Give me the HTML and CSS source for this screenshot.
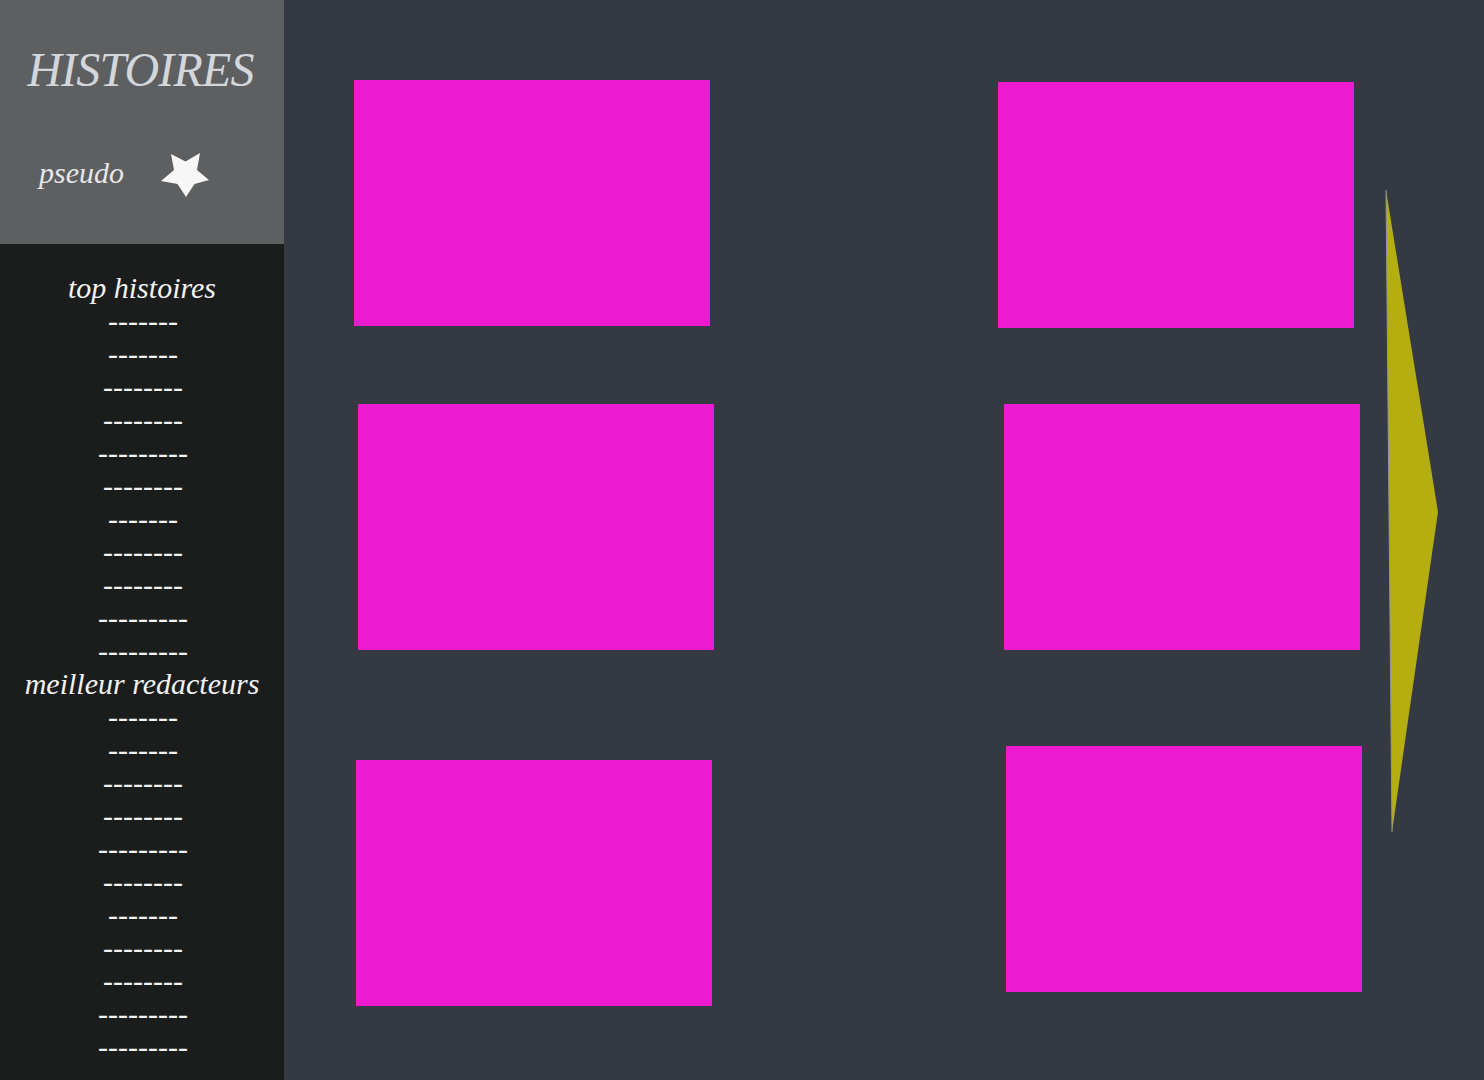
FILE: index.html
```html
<!DOCTYPE html>
<html lang="fr">
<head>
<meta charset="utf-8">
<title>Histoires</title>
<link rel="stylesheet" href="styles.css">
</head>
<body>
<div class="page">
  <aside class="sidebar">
    <header class="side-head">
      <h1 class="logo">HISTOIRES</h1>
      <div class="user">
        <span class="pseudo">pseudo</span>
        <svg class="star" width="50" height="48" viewBox="0 0 50 48" aria-hidden="true">
          <polygon fill="#f7f7f7" points="10,1 24.5,8.5 39,0 36,17 48,27 33.5,31 25,44 16.5,31 0,28 13,17"/>
        </svg>
      </div>
    </header>
    <nav class="side-lists">
      <h2 class="list-title">top histoires</h2>
      <ul class="dash-list">
        <li>-------</li><li>-------</li><li>--------</li><li>--------</li><li>---------</li><li>--------</li><li>-------</li><li>--------</li><li>--------</li><li>---------</li><li>---------</li>
      </ul>
      <h2 class="list-title">meilleur redacteurs</h2>
      <ul class="dash-list">
        <li>-------</li><li>-------</li><li>--------</li><li>--------</li><li>---------</li><li>--------</li><li>-------</li><li>--------</li><li>--------</li><li>---------</li><li>---------</li>
      </ul>
    </nav>
  </aside>
  <main class="main">
    <section class="grid">
      <div class="card c1"></div>
      <div class="card c2"></div>
      <div class="card c3"></div>
      <div class="card c4"></div>
      <div class="card c5"></div>
      <div class="card c6"></div>
    </section>
    <button class="next" aria-label="suivant">
      <svg width="54" height="644" viewBox="0 0 54 644" aria-hidden="true">
        <polygon fill="#b4ae10" points="1,1 53,323 7,643"/>
        <line x1="1" y1="1" x2="7" y2="643" stroke="#8f96a6" stroke-width="1"/>
      </svg>
    </button>
  </main>
</div>
</body>
</html>
```

FILE: styles.css
```css
html, body {
  margin: 0;
  padding: 0;
  height: 100%;
  background: #353942;
}

.page {
  display: flex;
  height: 1080px;
  font-family: "Liberation Serif", "Times New Roman", serif;
}

.sidebar {
  width: 284px;
  flex: 0 0 284px;
  display: flex;
  flex-direction: column;
  background: #1b1d1d;
}

.side-head {
  height: 244px;
  background: #5e5f61;
  box-sizing: border-box;
  padding-top: 40px;
}

.logo {
  margin: 0;
  font-style: italic;
  font-weight: normal;
  font-size: 48px;
  line-height: 60px;
  color: #d3d7dc;
  text-align: center;
  letter-spacing: -0.8px;
  padding-right: 3px;
}

.user {
  display: flex;
  align-items: flex-start;
  margin-top: 49px;
  padding-left: 39px;
}

.pseudo {
  font-style: italic;
  font-size: 30px;
  color: #e6e7e8;
  line-height: 40px;
  margin-top: 4px;
}

.star {
  margin-left: 37px;
  margin-top: 4px;
}

.side-lists {
  padding-top: 27px;
  text-align: center;
  color: #f2f2f2;
  font-style: italic;
}

.list-title {
  margin: 0;
  font-weight: normal;
  font-size: 30px;
  line-height: 33px;
}

.dash-list {
  list-style: none;
  margin: 0;
  padding: 0 0 0 2px;
  font-size: 30px;
  line-height: 33px;
  font-style: normal;
}

.main {
  flex: 1;
  display: flex;
  align-items: flex-start;
  padding: 80px 0 0 70px;
}

.grid {
  display: grid;
  grid-template-columns: 356px 356px;
  grid-template-rows: 246px 246px 246px;
  column-gap: 288px;
  row-gap: 78px;
}

.card {
  width: 356px;
  height: 246px;
  background: #ec1bd1;
}

.c2 { margin-top: 2px; }
.c3 { margin-left: 4px; }
.c4 { margin-left: 6px; }
.grid .c5 { margin-left: 2px; margin-top: 32px; }
.grid .c6 { margin-left: 8px; margin-top: 18px; }

.next {
  margin: 109px 0 0 31px;
  padding: 0;
  border: 0;
  background: none;
  display: block;
  cursor: pointer;
}

.next svg {
  display: block;
}
```
